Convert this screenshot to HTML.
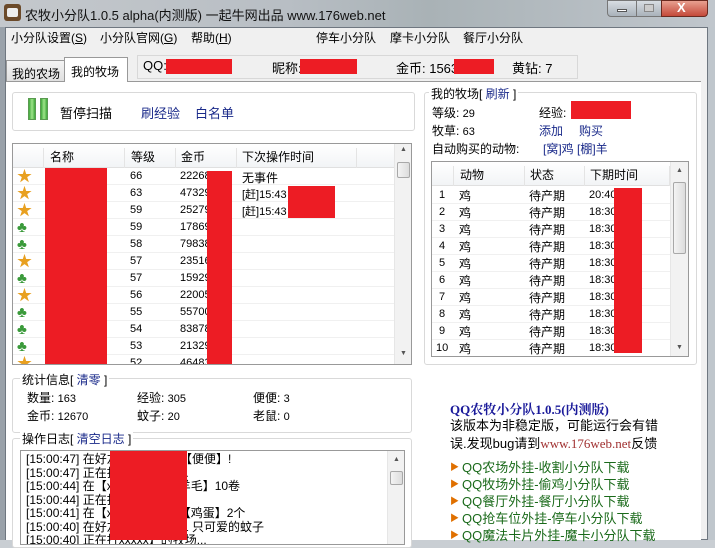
<!DOCTYPE html>
<html><head><meta charset="utf-8"><style>
*{margin:0;padding:0;box-sizing:border-box}
body{width:715px;height:540px;overflow:hidden;position:relative;background:#c9ced3;font-family:"Liberation Sans","Noto Sans CJK SC",sans-serif;font-size:12px;color:#000}
.a{position:absolute;white-space:nowrap}
.r{position:absolute;background:#ed1c24}
.lnk{color:#1a2a8a}
.grp{position:absolute;border:1px solid #d9d9d9;border-radius:3px;background:#fff}
.leg{position:absolute;background:#fff;padding:0 2px;font-size:12px}
.sb{position:absolute;background:#f2f2f2;border-left:1px solid #e6e6e6}
.thumb{position:absolute;left:2px;right:2px;border:1px solid #a8a8a8;border-radius:2px;background:linear-gradient(90deg,#f4f4f4,#dcdcdc)}
.li{position:absolute;left:450px;font-size:13px;height:17px;line-height:17px;color:#1a6a1a;white-space:nowrap}
.li b{display:inline-block;color:#e07000;font-size:9px;width:12px;vertical-align:top;line-height:17px}
</style></head><body>
<div class="a" style="left:0;top:0;width:715px;height:28px;background:linear-gradient(90deg,#c4c8cc,#b8bec4 40%,#a9b2b6 60%,#c0c6cc)"></div>
<div class="a" style="left:4px;top:4px;width:17px;height:17px;background:#6b4a2a;border-radius:3px"></div>
<div class="a" style="left:7px;top:8px;width:11px;height:9px;background:#eee;border-radius:2px"></div>
<div class="a" style="left:25px;top:5px;font-size:13px;color:#111">农牧小分队1.0.5 alpha(内测版) 一起牛网出品 www.176web.net</div>
<div class="a" style="left:607px;top:0;width:30px;height:17px;border:1px solid #777;border-radius:0 0 0 4px;background:linear-gradient(#d8dde2,#a9b2ba)"></div>
<div class="a" style="left:617px;top:9px;width:10px;height:3px;background:#fff;border:1px solid #555"></div>
<div class="a" style="left:636px;top:0;width:26px;height:17px;border:1px solid #777;background:linear-gradient(#d8dde2,#a9b2ba)"></div>
<div class="a" style="left:644px;top:4px;width:10px;height:8px;border:1px solid #888;background:#ccc"></div>
<div class="a" style="left:661px;top:0;width:47px;height:17px;border:1px solid #6a2a20;border-radius:0 0 4px 0;background:linear-gradient(#e8a090,#c4493a)"></div>
<div class="a" style="left:677px;top:0px;font-size:13px;font-weight:bold;color:#fff">X</div>
<div class="a" style="left:5px;top:27px;width:703px;height:513px;background:#f0f0f0;border:1px solid #6f7780"></div>
<div class="a" style="left:708px;top:27px;width:7px;height:513px;background:#bfc6cc"></div>
<div class="a" style="left:0;top:27px;width:5px;height:513px;background:#9aa2aa"></div>
<div class="a" style="left:11px;top:29px;font-size:12px">小分队设置(<u>S</u>)</div>
<div class="a" style="left:100px;top:29px">小分队官网(<u>G</u>)</div>
<div class="a" style="left:191px;top:29px">帮助(<u>H</u>)</div>
<div class="a" style="left:316px;top:29px">停车小分队</div>
<div class="a" style="left:390px;top:29px">摩卡小分队</div>
<div class="a" style="left:463px;top:29px">餐厅小分队</div>
<div class="a" style="left:6px;top:60px;width:59px;height:21px;border:1px solid #999;border-bottom:none;background:linear-gradient(#f4f4f4,#e0e0e0);padding:4px 0 0 5px">我的农场</div>
<div class="a" style="left:64px;top:57px;width:64px;height:25px;border:1px solid #999;border-bottom:none;background:#fff;padding:5px 0 0 6px;z-index:2">我的牧场</div>
<div class="a" style="left:137px;top:55px;width:441px;height:24px;border:1px solid #d8d8d8;background:#f0f0f0"></div>
<div class="a" style="left:143px;top:58px;font-size:13px">QQ:</div>
<div class="r" style="left:166px;top:59px;width:66px;height:15px"></div>
<div class="a" style="left:272px;top:58px;font-size:13px">昵称:</div>
<div class="r" style="left:300px;top:59px;width:57px;height:15px"></div>
<div class="a" style="left:396px;top:58px;font-size:13px">金币: 1563</div>
<div class="r" style="left:454px;top:59px;width:40px;height:15px"></div>
<div class="a" style="left:512px;top:58px;font-size:13px">黄钻: 7</div>
<div class="a" style="left:6px;top:81px;width:695px;height:459px;background:#fff;border-top:1px solid #999"></div>
<div class="grp" style="left:12px;top:92px;width:403px;height:39px"></div>
<div class="a" style="left:28px;top:98px;width:8px;height:22px;background:linear-gradient(90deg,#3fa83a,#9fe48a,#3fa83a);border:1px solid #5a9a50"></div>
<div class="a" style="left:40px;top:98px;width:8px;height:22px;background:linear-gradient(90deg,#3fa83a,#9fe48a,#3fa83a);border:1px solid #5a9a50"></div>
<div class="a" style="left:60px;top:103px;font-size:13px">暂停扫描</div>
<div class="a lnk" style="left:141px;top:103px;font-size:13px">刷经验</div>
<div class="a lnk" style="left:195px;top:103px;font-size:13px">白名单</div>
<div class="a" style="left:12px;top:143px;width:400px;height:222px;border:1px solid #999;background:#fff;overflow:hidden">
<div class="a" style="left:0;top:0;width:381px;height:24px;background:linear-gradient(#fff,#f2f4f6);border-bottom:1px solid #e0e0e0"></div>
<div class="a" style="left:30px;top:4px;height:20px;border-left:1px solid #e4e4e4;padding-left:6px">名称</div>
<div class="a" style="left:111px;top:4px;height:20px;border-left:1px solid #e4e4e4;padding-left:6px">等级</div>
<div class="a" style="left:162px;top:4px;height:20px;border-left:1px solid #e4e4e4;padding-left:5px">金币</div>
<div class="a" style="left:223px;top:4px;height:20px;border-left:1px solid #e4e4e4;padding-left:5px">下次操作时间</div>
<div class="a" style="left:343px;top:4px;height:20px;border-left:1px solid #e4e4e4"></div>
<div id="rows"></div>
<div class="sb" style="left:381px;top:0;width:18px;height:220px"><div class="a" style="left:5px;top:2px;font-size:7px;color:#555">▲</div><div class="thumb" style="top:18px;height:16px"></div><div class="a" style="left:5px;top:206px;font-size:7px;color:#555">▼</div></div>
</div>
<div class="r" style="left:45px;top:168px;width:62px;height:196px"></div>
<div class="r" style="left:207px;top:171px;width:25px;height:193px"></div>
<div class="r" style="left:288px;top:186px;width:47px;height:32px"></div>
<div class="grp" style="left:12px;top:378px;width:400px;height:55px"></div>
<div class="leg" style="left:20px;top:371px">统计信息[ <span class="lnk">清零</span> ]</div>
<div class="a" style="left:27px;top:389px">数量: <span style="font-size:11px">163</span></div>
<div class="a" style="left:137px;top:389px">经验: <span style="font-size:11px">305</span></div>
<div class="a" style="left:253px;top:389px">便便: <span style="font-size:11px">3</span></div>
<div class="a" style="left:27px;top:407px">金币: <span style="font-size:11px">12670</span></div>
<div class="a" style="left:137px;top:407px">蚊子: <span style="font-size:11px">20</span></div>
<div class="a" style="left:253px;top:407px">老鼠: <span style="font-size:11px">0</span></div>
<div class="grp" style="left:12px;top:438px;width:400px;height:110px"></div>
<div class="leg" style="left:20px;top:430px">操作日志[ <span class="lnk">清空日志</span> ]</div>
<div class="a" style="left:20px;top:450px;width:385px;height:95px;border:1px solid #999;background:#fff;overflow:hidden">
<div class="a" style="left:5px;top:2px;line-height:13.5px;font-size:12px">[15:00:47] 在好友家收了 2 坨【便便】!<br>[15:00:47] 正在打扫xx的牧场...<br>[15:00:44]  在【xxxx】收获【羊毛】10卷<br>[15:00:44] 正在打扫x牧场...<br>[15:00:41]  在【xxxxxx】刮了【鸡蛋】2个<br>[15:00:40] 在好友xxxx家拍了 1 只可爱的蚊子<br>[15:00:40] 正在打xxxxx】的牧场...</div>
<div class="sb" style="left:366px;top:0;width:18px;height:95px"><div class="a" style="left:5px;top:5px;font-size:7px;color:#555">▲</div><div class="thumb" style="top:20px;height:14px"></div></div>
</div>
<div class="r" style="left:110px;top:451px;width:77px;height:89px"></div>
<div class="grp" style="left:424px;top:92px;width:273px;height:273px"></div>
<div class="leg" style="left:429px;top:85px">我的牧场[ <span class="lnk">刷新</span> ]</div>
<div class="a" style="left:432px;top:104px">等级: <span style="font-size:11px">29</span></div>
<div class="a" style="left:539px;top:104px">经验:</div>
<div class="r" style="left:571px;top:101px;width:60px;height:18px"></div>
<div class="a" style="left:432px;top:122px">牧草: <span style="font-size:11px">63</span></div>
<div class="a lnk" style="left:539px;top:122px">添加</div>
<div class="a lnk" style="left:579px;top:122px">购买</div>
<div class="a" style="left:432px;top:140px">自动购买的动物:</div>
<div class="a lnk" style="left:543px;top:140px">[窝]鸡 [棚]羊</div>
<div class="a" style="left:431px;top:161px;width:258px;height:196px;border:1px solid #999;background:#fff;overflow:hidden">
<div class="a" style="left:0;top:0;width:238px;height:24px;background:linear-gradient(#fff,#f2f4f6);border-bottom:1px solid #e0e0e0"></div>
<div class="a" style="left:21px;top:4px;height:20px;border-left:1px solid #e4e4e4;padding-left:6px">动物</div>
<div class="a" style="left:92px;top:4px;height:20px;border-left:1px solid #e4e4e4;padding-left:5px">状态</div>
<div class="a" style="left:152px;top:4px;height:20px;border-left:1px solid #e4e4e4;padding-left:5px">下期时间</div>
<div class="a" style="left:237px;top:4px;height:20px;border-left:1px solid #e4e4e4"></div>
<div id="arows"></div>
<div class="sb" style="left:238px;top:0;width:18px;height:194px"><div class="a" style="left:5px;top:5px;font-size:7px;color:#555">▲</div><div class="thumb" style="top:20px;height:72px"></div><div class="a" style="left:5px;top:182px;font-size:7px;color:#555">▼</div></div>
</div>
<div class="r" style="left:614px;top:188px;width:28px;height:165px"></div>
<div class="a" style="left:450px;top:399px;font-family:'Liberation Serif','Noto Serif CJK SC',serif;font-weight:bold;color:#1a1a9a;font-size:13px">QQ农牧小分队1.0.5(内测版)</div>
<div class="a" style="left:450px;top:417px;font-size:13px;line-height:18px">该版本为非稳定版，可能运行会有错<br>误.发现bug请到<span style="font-family:'Liberation Serif',serif;color:#a03030">www.176web.net</span>反馈</div>
<div class="li" style="top:459px"><b>▶</b>QQ农场外挂-收割小分队下载</div>
<div class="li" style="top:476px"><b>▶</b>QQ牧场外挂-偷鸡小分队下载</div>
<div class="li" style="top:493px"><b>▶</b>QQ餐厅外挂-餐厅小分队下载</div>
<div class="li" style="top:510px"><b>▶</b>QQ抢车位外挂-停车小分队下载</div>
<div class="li" style="top:527px"><b>▶</b>QQ魔法卡片外挂-魔卡小分队下载</div>
<script>
var lv=[66,63,59,59,58,57,57,56,55,54,53,52],g=['22268','47329','25279','17869','79838','23516','15929','22005','55700','83878','21329','46483'],st=[1,1,1,0,0,1,0,1,0,0,0,1],ev=['无事件','[赶]15:43','[赶]15:43'];
var h='';for(var i=0;i<12;i++){var y=24+i*17;h+='<div class="a" style="left:0;top:'+y+'px;width:381px;height:17px;border-bottom:1px solid #f0f0f0"></div>';
h+='<div class="a" style="left:4px;top:'+(y)+'px;font-size:15px;line-height:17px;color:'+(st[i]?'#e8a020':'#3a9a3a')+'">'+(st[i]?'★':'♣')+'</div>';
h+='<div class="a" style="left:117px;top:'+(y+2)+'px;font-size:11px">'+lv[i]+'</div><div class="a" style="left:167px;top:'+(y+2)+'px;font-size:11px">'+g[i]+'</div>';
if(ev[i])h+='<div class="a" style="left:229px;top:'+(y+1)+'px;font-size:'+(i?11:12)+'px">'+ev[i]+'</div>';}
document.getElementById('rows').innerHTML=h;
h='';for(var i=0;i<10;i++){var y=25+i*17;h+='<div class="a" style="left:0;top:'+y+'px;width:238px;height:17px;border-bottom:1px solid #f0f0f0"></div>';
h+='<div class="a" style="left:'+(i<9?7:4)+'px;top:'+(y+2)+'px;font-size:11px">'+(i+1)+'</div><div class="a" style="left:27px;top:'+y+'px">鸡</div><div class="a" style="left:97px;top:'+y+'px">待产期</div><div class="a" style="left:157px;top:'+(y+2)+'px;font-size:11px">'+(i?'18:30':'20:40')+'</div>';}
document.getElementById('arows').innerHTML=h;
</script>
</body></html>
